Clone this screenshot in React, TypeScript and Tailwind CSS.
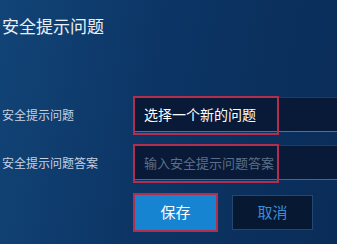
import React from "react";

export default function App() {
  const font = { fontFamily: '"Noto Sans CJK SC", "Noto Sans", sans-serif' };
  return (
    <div
      className="w-[337px] h-[244px] overflow-hidden bg-[linear-gradient(100deg,#124477_0%,#0c3565_45%,#0a2c58_100%)] relative"
      style={font}
    >
      <div className="pt-[14px] pl-[2px] text-[17px] leading-[24px] text-[#e9f0f8]">安全提示问题</div>

      <div className="mt-[59px] flex items-center h-[35px]">
        <div className="w-[134px] pl-[2px] text-[12px] text-[#c6d2e0]">安全提示问题</div>
        <div className="relative flex-1 h-[35px] bg-[#081a38] border-t border-t-[#1d3d68] border-b border-b-[#4272a8] flex items-center">
          <span className="pl-[10px] text-[14px] text-white">选择一个新的问题</span>
          <div className="absolute left-[-1px] top-[-2px] w-[146px] h-[39px] border-2 border-[#b12e4c]"></div>
        </div>
      </div>

      <div className="mt-[13px] flex items-center h-[35px]">
        <div className="w-[134px] pl-[2px] text-[12px] text-[#c6d2e0]">安全提示问题答案</div>
        <div className="relative flex-1 h-[35px] bg-[#081a38] border-t border-t-[#1d3d68] border-b border-b-[#3c6aa0] flex items-center">
          <div className="whitespace-nowrap pl-[10px] text-[13px] text-[#5c6f88]">输入安全提示问题答案</div>
          <div className="absolute left-[-1px] top-[-2px] w-[146px] h-[39px] border-2 border-[#b12e4c]"></div>
        </div>
      </div>

      <div className="mt-[13px] flex items-center pl-[133px] gap-[14px]">
        <div className="w-[85px] h-[39px] border-2 border-[#b12e4c] bg-[#1784d2] flex items-center justify-center text-[15px] text-white">保存</div>
        <div className="w-[81px] h-[35px] border border-[#24476f] bg-[#071833] flex items-center justify-center text-[15px] text-[#3a8cd8]">取消</div>
      </div>
    </div>
  );
}
